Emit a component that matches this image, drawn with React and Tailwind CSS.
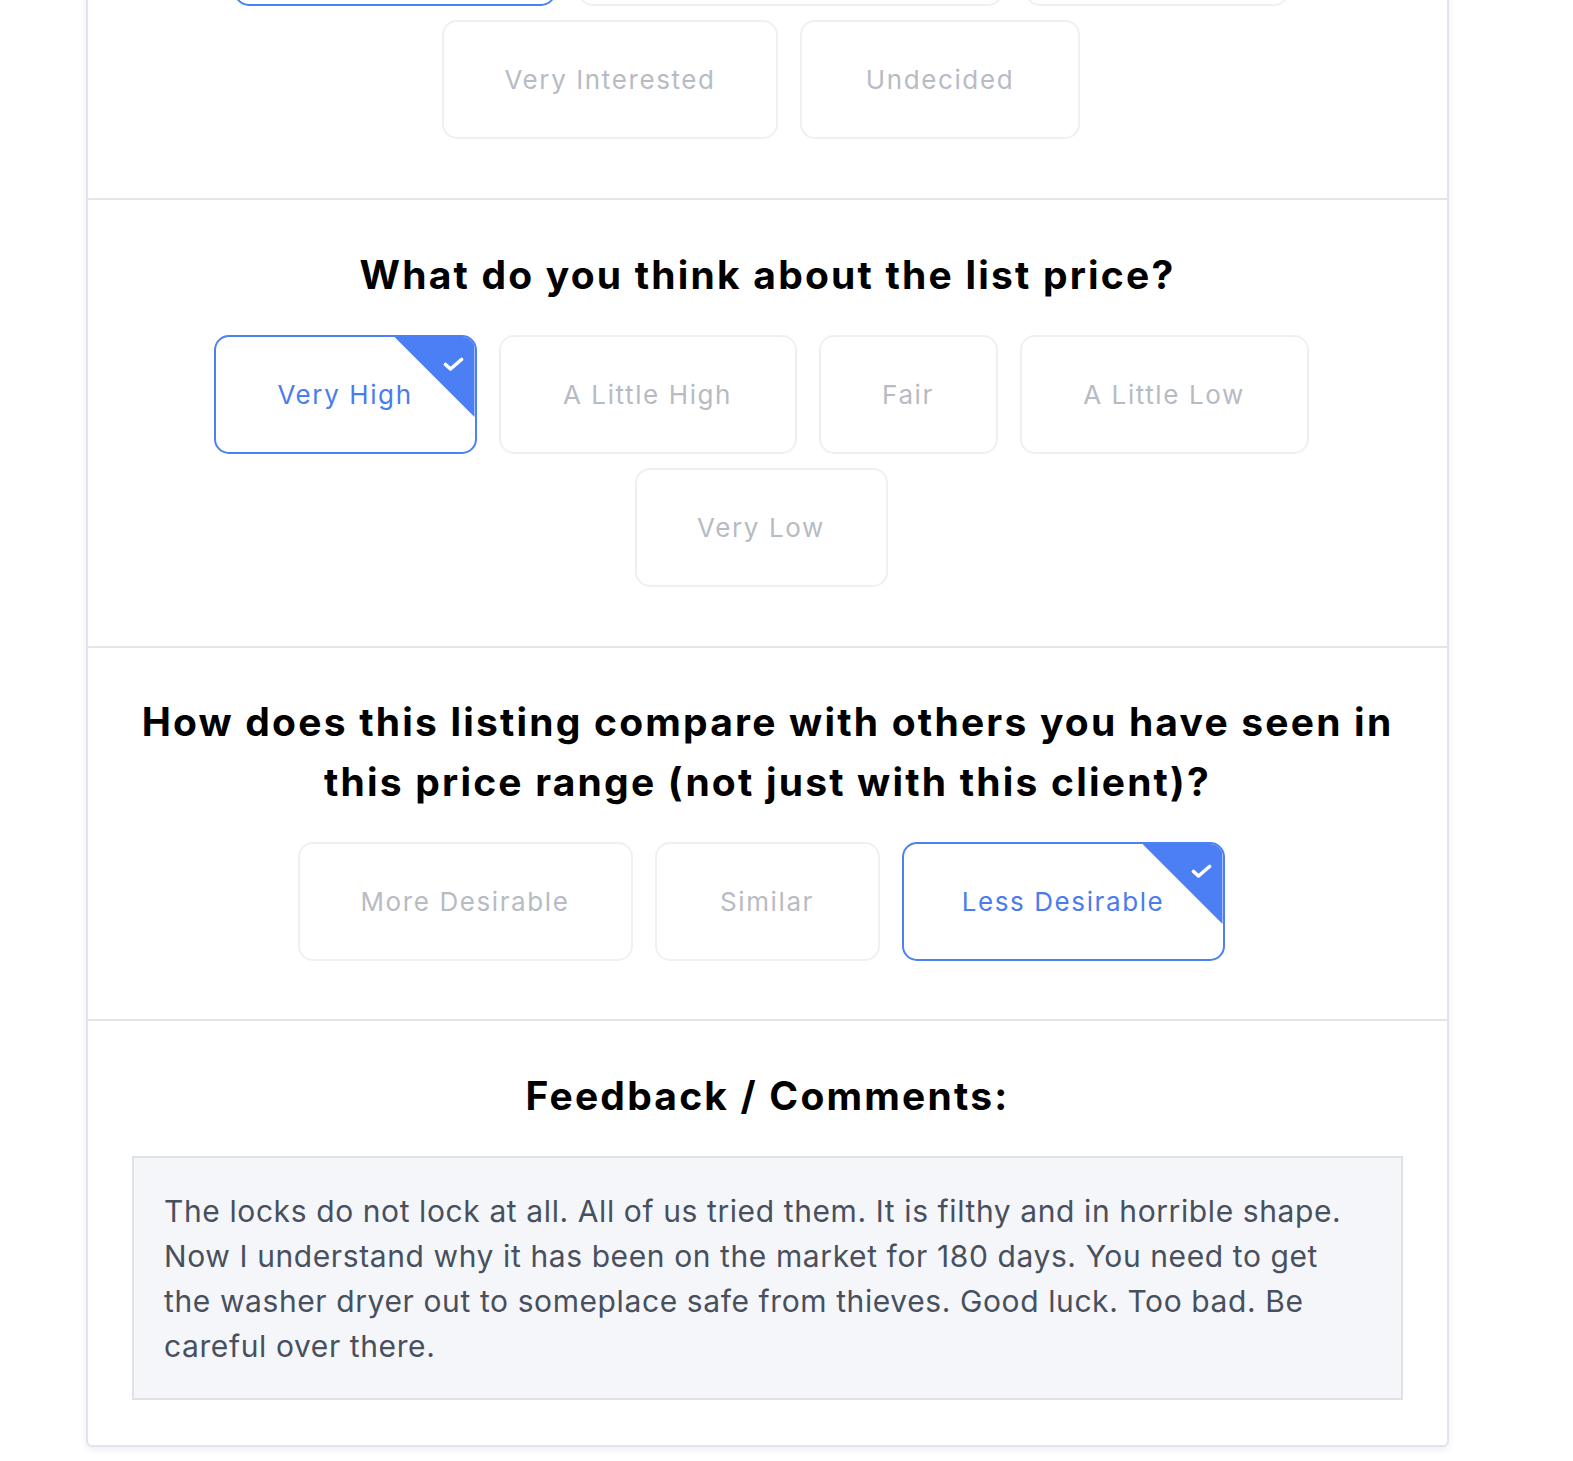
import React from 'react'

const FONT = { fontFamily: 'Inter, "Noto Sans", sans-serif' }

const INTEREST = [
  { label: 'Not Interested', w: 'w-[322px]', selected: true },
  { label: 'Somewhat Interested', w: 'w-[425px]' },
  { label: 'Interested', w: 'w-[264px]' },
  { label: 'Very Interested', w: 'w-[336px]' },
  { label: 'Undecided', w: 'w-[280px]' },
]

const PRICE = [
  { label: 'Very High', w: 'w-[263px]', selected: true },
  { label: 'A Little High', w: 'w-[298px]' },
  { label: 'Fair', w: 'w-[179px]' },
  { label: 'A Little Low', w: 'w-[289px]' },
  { label: 'Very Low', w: 'w-[253px]' },
]

const COMPARE = [
  { label: 'More Desirable', w: 'w-[335px]' },
  { label: 'Similar', w: 'w-[225px]' },
  { label: 'Less Desirable', w: 'w-[323px]', selected: true },
]

function Option({ label, w, selected }) {
  return (
    <button
      type="button"
      className={
        'relative h-[119px] shrink-0 overflow-hidden rounded-[15px] border-2 bg-white text-[26px] tracking-[1.6px] ' +
        w +
        (selected ? ' border-[#4b81f4] text-[#4a7cf0]' : ' border-[#eff0f4] text-[#b7bbc3]')
      }
    >
      {label}
      {selected && (
        <>
          <span className="absolute right-0 top-0 h-[80px] w-[80px] bg-[#4c7ff3] [clip-path:polygon(0_0,100%_0,100%_100%)]" />
          <svg className="absolute right-[11px] top-[20px]" width="21" height="15" viewBox="0 0 21 15">
            <polyline points="2.5,7.5 7.5,12 18.5,2.5" fill="none" stroke="#fff" strokeWidth="3.6" strokeLinecap="round" strokeLinejoin="round" />
          </svg>
        </>
      )}
    </button>
  )
}

function Options({ items }) {
  return (
    <div className="flex flex-wrap justify-center gap-x-[22px] gap-y-[14px] pr-[13px]">
      {items.map((o) => (
        <Option key={o.label} {...o} />
      ))}
    </div>
  )
}

function Heading({ children }) {
  return (
    <h2 className="mb-[30px] text-center text-[39px] font-bold leading-[60px] tracking-[2.2px] text-black">
      {children}
    </h2>
  )
}

export default function App() {
  return (
    <div className="min-h-screen overflow-hidden bg-white" style={FONT}>
      <div className="mb-[20px] ml-[86px] w-[1363px] rounded-b-[6px] border-x-2 border-b-2 border-[#e2e4ee] shadow-[0_3px_6px_rgba(30,40,80,0.08)]">
        <section className="-mt-[113px] px-[44px] pb-[59px]">
          <Options items={INTEREST} />
        </section>

        <section className="border-t-2 border-[#e3e5eb] px-[44px] pb-[59px] pt-[45px]">
          <Heading>What do you think about the list price?</Heading>
          <Options items={PRICE} />
        </section>

        <section className="border-t-2 border-[#e3e5eb] px-[44px] pb-[58px] pt-[44px]">
          <Heading>
            How does this listing compare with others you have seen in
            <br />
            this price range (not just with this client)?
          </Heading>
          <Options items={COMPARE} />
        </section>

        <section className="border-t-2 border-[#e3e5eb] px-[44px] pb-[45px] pt-[45px]">
          <Heading>Feedback / Comments:</Heading>
          <div className="border-2 border-[#e0e2e8] bg-[#f5f6fa] px-[30px] pb-[29px] pt-[31px] text-[30px] leading-[45px] tracking-[0.6px] text-[#48505e]">
            The locks do not lock at all. All of us tried them. It is filthy and in horrible shape. Now I understand why it has been on the market for 180 days. You need to get the washer dryer out to someplace safe from thieves. Good luck. Too bad. Be careful over there.
          </div>
        </section>
      </div>
    </div>
  )
}
